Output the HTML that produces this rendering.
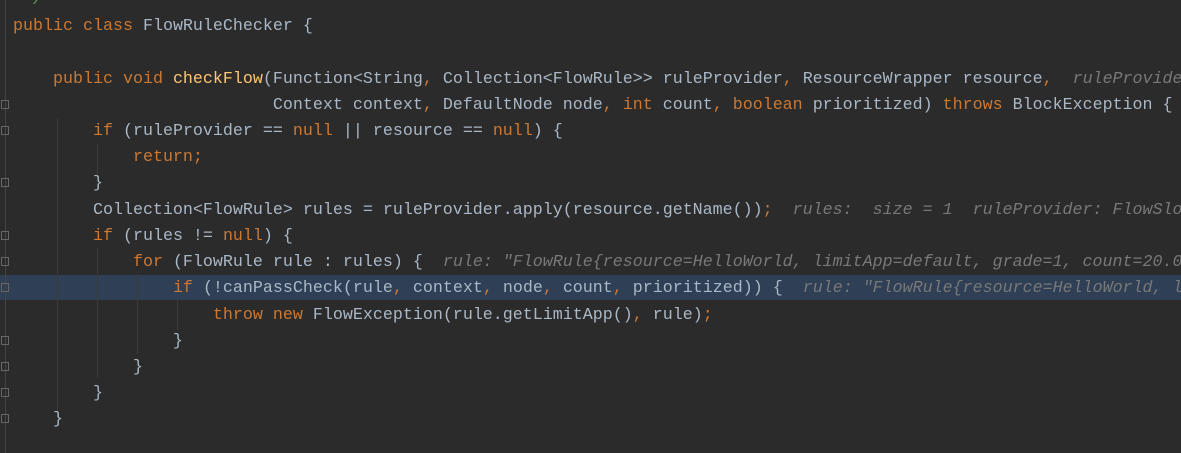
<!DOCTYPE html>
<html><head><style>
body{margin:0;width:1181px;height:453px;background:#2b2b2b;overflow:hidden;position:relative;font-family:"Liberation Mono",monospace;font-size:16.67px;color:#a9b7c6}
.wrap{position:absolute;left:0;top:0;width:1181px;height:453px;overflow:hidden}
.l{position:absolute;left:13px;white-space:pre;height:26px;line-height:26px}
.k{color:#cc7832}.m{color:#ffc66d}.h{color:#787878;font-style:italic}.c{color:#629755;font-style:italic}
.hl{position:absolute;left:0;top:275px;width:1181px;height:25px;background:#2f3f55}
.g{position:absolute;width:1px;background:#3a3a3a}
.f{position:absolute;left:1px;width:8px;height:9px;border:1px solid #666;box-sizing:border-box}
.gut{position:absolute;left:5px;top:0;width:1px;height:453px;background:#444}
</style></head><body><div class="wrap">
<div class="hl"></div>
<div class="gut"></div>
<div class="g" style="left:57px;top:118px;height:300px"></div>
<div class="g" style="left:97px;top:144px;height:30px"></div>
<div class="g" style="left:97px;top:248px;height:130px"></div>
<div class="g" style="left:137px;top:274px;height:80px"></div>
<div class="g" style="left:177px;top:300px;height:30px"></div>
<div class="f" style="top:100px"></div>
<div class="f" style="top:126px"></div>
<div class="f" style="top:178px"></div>
<div class="f" style="top:231px"></div>
<div class="f" style="top:257px"></div>
<div class="f" style="top:283px"></div>
<div class="f" style="top:336px"></div>
<div class="f" style="top:362px"></div>
<div class="f" style="top:388px"></div>
<div class="f" style="top:414px"></div>
<div class="l" style="top:-12px"><span class="c"> */</span></div>
<div class="l" style="top:14px"><span class="k">public class </span>FlowRuleChecker {</div>
<div class="l" style="top:67px">    <span class="k">public void </span><span class="m">checkFlow</span>(Function&lt;String<span class="k">, </span>Collection&lt;FlowRule&gt;&gt; ruleProvider<span class="k">, </span>ResourceWrapper resource<span class="k">,</span>  <span class="h">ruleProvider: FlowSlot</span></div>
<div class="l" style="top:93px">                          Context context<span class="k">, </span>DefaultNode node<span class="k">, int </span>count<span class="k">, boolean </span>prioritized) <span class="k">throws </span>BlockException {</div>
<div class="l" style="top:119px">        <span class="k">if </span>(ruleProvider == <span class="k">null </span>|| resource == <span class="k">null</span>) {</div>
<div class="l" style="top:145px">            <span class="k">return;</span></div>
<div class="l" style="top:171px">        }</div>
<div class="l" style="top:198px">        Collection&lt;FlowRule&gt; rules = ruleProvider.apply(resource.getName())<span class="k">;</span>  <span class="h">rules:  size = 1  ruleProvider: FlowSlot</span></div>
<div class="l" style="top:224px">        <span class="k">if </span>(rules != <span class="k">null</span>) {</div>
<div class="l" style="top:250px">            <span class="k">for </span>(FlowRule rule : rules) {  <span class="h">rule: "FlowRule{resource=HelloWorld, limitApp=default, grade=1, count=20.0</span></div>
<div class="l" style="top:276px">                <span class="k">if </span>(!canPassCheck(rule<span class="k">, </span>context<span class="k">, </span>node<span class="k">, </span>count<span class="k">, </span>prioritized)) {  <span class="h">rule: "FlowRule{resource=HelloWorld, l</span></div>
<div class="l" style="top:303px">                    <span class="k">throw new </span>FlowException(rule.getLimitApp()<span class="k">, </span>rule)<span class="k">;</span></div>
<div class="l" style="top:329px">                }</div>
<div class="l" style="top:355px">            }</div>
<div class="l" style="top:381px">        }</div>
<div class="l" style="top:407px">    }</div>
</div></body></html>
